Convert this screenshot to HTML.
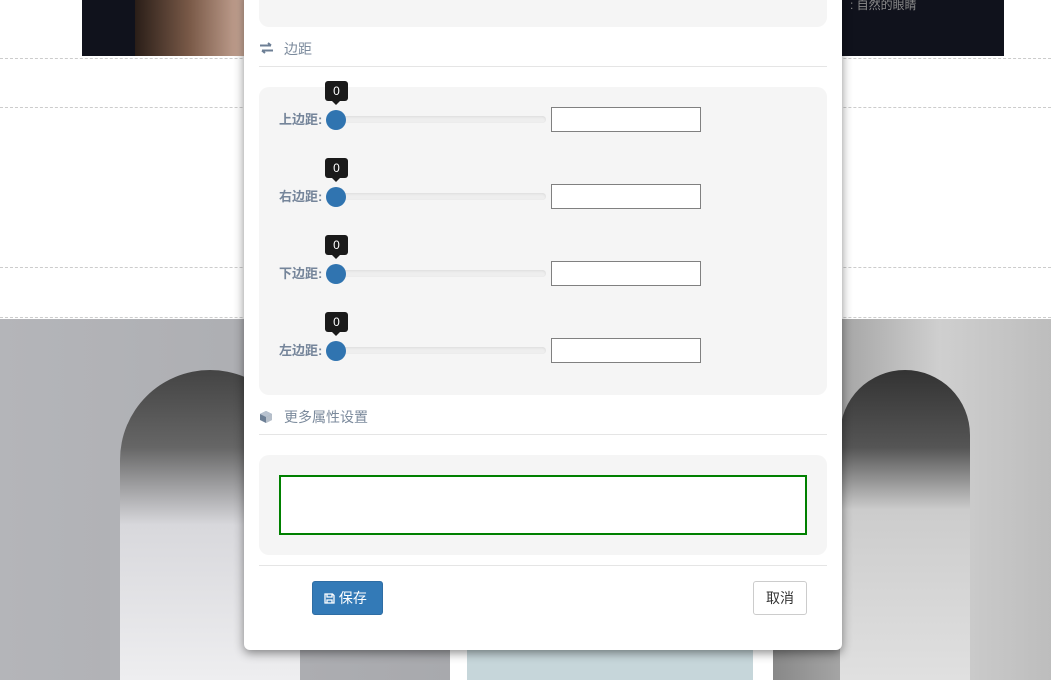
<!DOCTYPE html>
<html><head><meta charset="utf-8"><style>
*{margin:0;padding:0;box-sizing:border-box}
body{width:1051px;height:680px;overflow:hidden;position:relative;background:#fff;font-family:"Liberation Sans","Noto Sans CJK SC",sans-serif}
.abs{position:absolute}
.dash{position:absolute;left:0;width:1051px;border-top:1px dashed #ccc}
.modal{position:absolute;left:244px;top:-10px;width:598px;height:660px;background:#fff;border-radius:0 0 6px 6px;box-shadow:0 3px 10px rgba(0,0,0,.45)}
.panel{position:absolute;left:15px;width:568px;background:#f5f5f5;border-radius:10px}
.hd{position:absolute;left:15px;width:568px;border-bottom:1px solid #e5e5e5;color:#7b8a9c;font-size:14px}
.lbl{position:absolute;left:20px;font-size:13px;font-weight:bold;color:#75859a}
.track{position:absolute;left:77px;width:210px;height:7px;border-radius:4px;background:#eee;box-shadow:inset 0 1px 2px rgba(0,0,0,.08)}
.thumb{position:absolute;left:67px;width:20px;height:20px;border-radius:50%;background:#3074b0}
.tip{position:absolute;left:66px;width:23px;height:20px;border-radius:3px;background:#1a1a1a;color:#fff;font-size:12px;text-align:center;line-height:20px}
.tip:after{content:"";position:absolute;left:7px;top:20px;border:4px solid transparent;border-top-color:#1a1a1a}
.inp{position:absolute;left:292px;width:150px;height:25px;border:1px solid #808080;background:#fff}
</style></head><body>
<div class="abs" style="left:82px;top:0;width:922px;height:56px;background:#10121c"></div>
<div class="abs" style="left:135px;top:0;width:110px;height:56px;background:linear-gradient(90deg,#2a1e18,#7a5a48,#c9a898)"></div>
<div class="abs" style="left:850px;top:-4px;color:#8a8a8a;font-size:12px">: 自然的眼睛</div>
<div class="dash" style="top:58px"></div>
<div class="dash" style="top:107px"></div>
<div class="dash" style="top:267px"></div>
<div class="dash" style="top:317px"></div>
<div class="abs" style="left:0;top:319px;width:450px;height:361px;background:linear-gradient(90deg,#b4b5b9,#a8a9ad)"></div>
<div class="abs" style="left:120px;top:370px;width:180px;height:310px;background:linear-gradient(180deg,#444 0%,#666 25%,#d8d8dc 50%,#eeeef0 100%);border-radius:90px 90px 0 0"></div>
<div class="abs" style="left:467px;top:319px;width:286px;height:361px;background:#c6d6da"></div>
<div class="abs" style="left:773px;top:319px;width:278px;height:361px;background:linear-gradient(90deg,#888,#cfcfcf 60%,#bdbdbd)"></div>
<div class="abs" style="left:840px;top:370px;width:130px;height:310px;background:linear-gradient(180deg,#333 0%,#555 25%,#ccc 45%,#e0e0e0 100%);border-radius:65px 65px 0 0"></div>

<div class="modal">
<div class="panel" style="top:0;height:37px"></div>
<div class="hd" style="top:48px;height:29px">
<svg class="abs" style="left:0;top:4px" width="15" height="12" viewBox="0 0 15 12"><path d="M1 3.5h11M9 1l3 2.5M14 8.5H3M6 11L3 8.5" stroke="#6d7f95" stroke-width="2" fill="none"/></svg>
<span class="abs" style="left:25px;top:1px">边距</span></div>
<div class="panel" style="top:97px;height:308px">
<div class="tip" style="top:-6px">0</div><div class="lbl" style="top:22px">上边距:</div><div class="track" style="top:29px"></div><div class="thumb" style="top:23px"></div><div class="inp" style="top:20px"></div>
<div class="tip" style="top:71px">0</div><div class="lbl" style="top:99px">右边距:</div><div class="track" style="top:106px"></div><div class="thumb" style="top:100px"></div><div class="inp" style="top:97px"></div>
<div class="tip" style="top:148px">0</div><div class="lbl" style="top:176px">下边距:</div><div class="track" style="top:183px"></div><div class="thumb" style="top:177px"></div><div class="inp" style="top:174px"></div>
<div class="tip" style="top:225px">0</div><div class="lbl" style="top:253px">左边距:</div><div class="track" style="top:260px"></div><div class="thumb" style="top:254px"></div><div class="inp" style="top:251px"></div>
</div>
<div class="hd" style="top:415px;height:30px">
<svg class="abs" style="left:0;top:5px" width="14" height="14" viewBox="0 0 14 14"><path d="M7 1l6 3v6l-6 3-6-3V4z" fill="#6d7f95"/><path d="M7 1l6 3-6 3-6-3z" fill="#b8c2cf"/><path d="M7 7v6l6-3V4z" fill="#fff" opacity=".5"/></svg>
<span class="abs" style="left:25px;top:2px">更多属性设置</span></div>
<div class="panel" style="top:465px;height:100px">
<div class="abs" style="left:20px;top:20px;width:528px;height:60px;border:2px solid #008000;background:#fff"></div>
</div>
<div class="abs" style="left:15px;top:575px;width:568px;border-top:1px solid #e5e5e5"></div>
<div class="abs" style="left:68px;top:591px;width:71px;height:34px;background:#337ab7;border:1px solid #2e6da4;border-radius:3px;color:#fff;font-size:14px;line-height:32px;padding-left:11px">
<svg style="vertical-align:-1px" width="11" height="11" viewBox="0 0 11 11"><path d="M1 1h7.5L10 2.5V10H1z M3 1v3h5V1 M3 10V7h5v3" stroke="#fff" stroke-width="1.3" fill="none"/></svg> 保存</div>
<div class="abs" style="left:509px;top:591px;width:54px;height:34px;background:#fff;border:1px solid #ccc;border-radius:3px;color:#333;font-size:14px;line-height:32px;text-align:center">取消</div>
</div>
</body></html>
